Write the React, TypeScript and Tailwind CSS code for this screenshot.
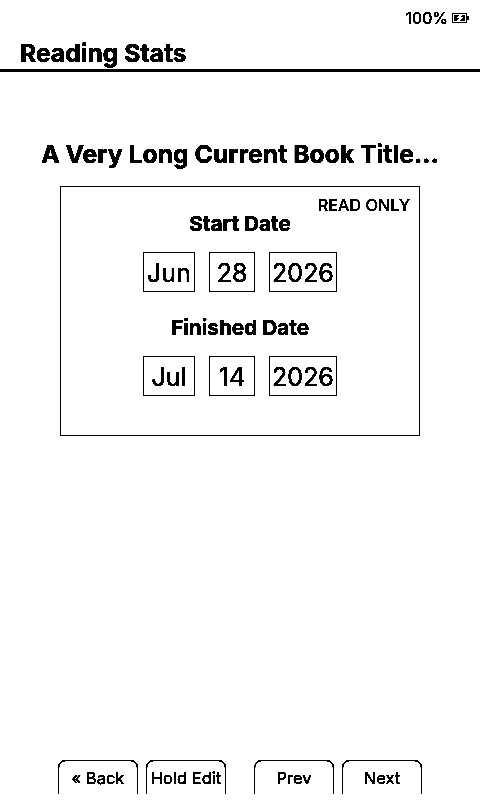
import React from 'react';

function Battery() {
  return (
    <svg width="17" height="10" viewBox="0 0 17 10" className="ml-[5px]" shapeRendering="crispEdges">
      <rect x="0.5" y="0.5" width="14" height="9" fill="none" stroke="#000" />
      <rect x="2" y="2" width="11" height="6" fill="#000" />
      <rect x="15" y="3" width="1.5" height="4" fill="#000" />
      <path d="M9 2 H10 V3 H9 V4 H11 V5 H10 V6 H9 V7 H8 V8 H5 V7 H6 V6 H7 V5 H5 V4 H6 V3 H7 V2 Z" fill="#fff" />
    </svg>
  );
}

function DateBox({ value, width }: { value: string; width: string }) {
  return (
    <div className={`${width} h-10 pt-[2px] border border-black flex items-center justify-center text-[25px] leading-none`}>
      {value}
    </div>
  );
}

function DateRow({ label, month, day, year }: { label: string; month: string; day: string; year: string }) {
  return (
    <div className="flex flex-col items-center">
      <div className="text-[20.75px] leading-6 font-bold">{label}</div>
      <div className="mt-4 flex gap-[14px]">
        <DateBox value={month} width="w-[52px]" />
        <DateBox value={day} width="w-[46px]" />
        <DateBox value={year} width="w-[68px]" />
      </div>
    </div>
  );
}

function FooterButton({ label }: { label: string }) {
  return (
    <div className="w-20 h-[34px] pt-[2px] border border-b-0 border-black rounded-t-lg flex items-center justify-center text-[16.5px] leading-none">
      {label}
    </div>
  );
}

export default function App() {
  return (
    <div className="w-[480px] h-[800px] bg-white text-black flex flex-col font-['Inter',sans-serif] brightness-[0.58] contrast-[2000%]">
      <div className="h-9 pr-[11px] flex items-center justify-end text-[16px] leading-none">
        <span className="mr-[-1px]">100%</span>
        <Battery />
      </div>
      <div className="h-9 pl-5 pt-[2px] border-b-[3px] border-black flex items-center">
        <h1 className="text-[24.7px] leading-none font-bold">Reading Stats</h1>
      </div>

      <h2 className="mt-[66px] text-center text-[24.75px] leading-8 font-bold">A Very Long Current Book Title...</h2>

      <div className="relative mt-4 mx-[60px] h-[250px] border border-black pt-[25px] flex flex-col gap-6">
        <div className="absolute top-[8px] right-[9px] text-[16.3px] leading-5">READ ONLY</div>
        <DateRow label="Start Date" month="Jun" day="28" year="2026" />
        <DateRow label="Finished Date" month="Jul" day="14" year="2026" />
      </div>

      <div className="mt-auto mb-[6px] pl-[58px] flex">
        <div className="flex gap-2">
          <FooterButton label="« Back" />
          <FooterButton label="Hold Edit" />
        </div>
        <div className="ml-7 flex gap-2">
          <FooterButton label="Prev" />
          <FooterButton label="Next" />
        </div>
      </div>
    </div>
  );
}
